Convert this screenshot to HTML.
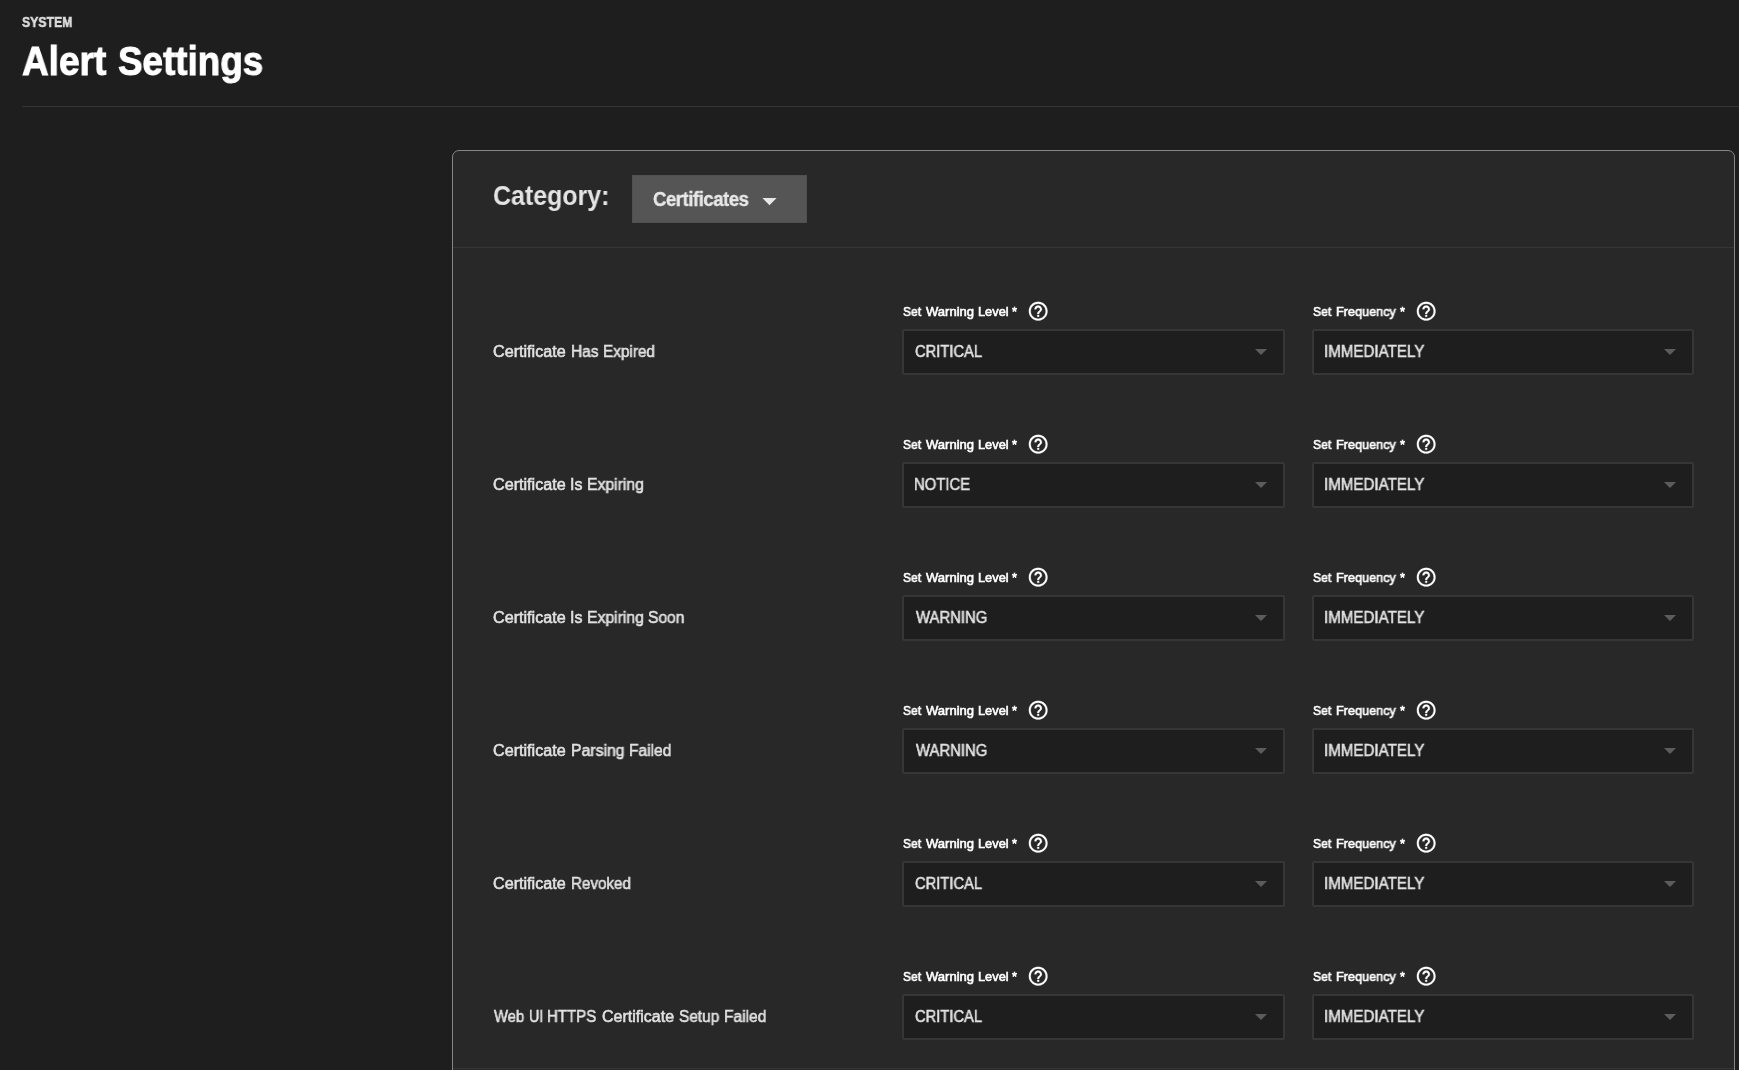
<!DOCTYPE html>
<html lang="en">
<head>
<meta charset="utf-8">
<title>Alert Settings</title>
<style>
html,body{margin:0;padding:0;}
body{width:1739px;height:1070px;overflow:hidden;background:#1e1e1e;position:relative;font-family:"Liberation Sans",sans-serif;color:#fff;}
.t{position:absolute;white-space:nowrap;line-height:1;transform-origin:0 0;will-change:transform;}
.sys{font-size:15px;font-weight:700;color:#dcdcdc;-webkit-text-stroke:0.6px #dcdcdc;}
.title{font-size:41px;font-weight:700;color:#fff;-webkit-text-stroke:1px #fff;}
.cat{font-size:27px;font-weight:700;color:#e4e4e4;}
.cert{font-size:20px;font-weight:700;color:#e8e8e8;letter-spacing:-0.5px;-webkit-text-stroke:0.35px #e8e8e8;}
.lab{font-size:12.8px;font-weight:400;color:#fff;-webkit-text-stroke:0.6px #fff;}
.val{font-size:16px;color:#e2e2e2;-webkit-text-stroke:0.55px #e2e2e2;}
.row{font-size:16px;color:#e2e2e2;-webkit-text-stroke:0.55px #e2e2e2;}
.hr{position:absolute;left:22px;top:106px;width:1717px;height:1px;background:#343434;}
.card{position:absolute;left:452px;top:150px;width:1281px;height:960px;border:1px solid #858585;border-radius:7px;background:#282828;}
.div{position:absolute;left:453px;width:1281px;height:1px;background:#363636;}
.btn{position:absolute;left:632px;top:175px;width:175px;height:48px;background:#555;box-sizing:border-box;border:1px solid #505050;}
.sel{position:absolute;width:383px;height:46px;box-sizing:border-box;border:2px solid #363636;border-radius:2px;background:#1e1e1e;}
svg{position:absolute;overflow:visible;}
</style>
</head>
<body>
<header><div class="crumb"><span class="t sys" id="sys" style="left:21.67px;top:14.0px;transform:scaleX(0.8154)">SYSTEM</span></div><h1 style="margin:0;font-size:0"><span class="t title" id="ti0" style="left:22.35px;top:41.0px;transform:scaleX(0.9023)">Alert</span> <span class="t title" id="ti1" style="left:117.83px;top:41.0px;transform:scaleX(0.8975)">Settings</span></h1></header>
<div class="hr"></div>
<div class="card"></div>
<div class="div" style="top:247px"></div>
<div class="div" style="top:1068px"></div>
<div class="cathead"><span class="t cat" id="cat" style="left:493.44px;top:183.3px;transform:scaleX(0.9241)">Category:</span><div class="btn"></div><span class="t cert" id="cert" style="left:652.91px;top:189.2px;transform:scaleX(0.9278)">Certificates</span>
<svg style="left:762px;top:198px" width="15" height="8" viewBox="0 0 15 8"><polygon points="0.4,0 14.6,0 7.5,7.2" fill="#e8e8e8"/></svg></div>
<div class="alert-row">
<div class="name"><span class="t row" id="r0_0" style="left:493.18px;top:344.2px;transform:scaleX(1.0090)">Certificate</span> <span class="t row" id="r0_1" style="left:570.50px;top:344.2px;transform:scaleX(0.9686)">Has</span> <span class="t row" id="r0_2" style="left:603.24px;top:344.2px;transform:scaleX(0.9572)">Expired</span></div>
<div class="field"><label><span class="t lab" id="lw0_0" style="left:902.78px;top:306.2px;transform:scaleX(0.9432)">Set</span> <span class="t lab" id="lw0_1" style="left:926.09px;top:306.2px;transform:scaleX(1.0185)">Warning</span> <span class="t lab" id="lw0_2" style="left:977.72px;top:306.2px;transform:scaleX(0.9951)">Level</span> <span class="t lab" id="lw0_3" style="left:1011.70px;top:306.2px;transform:scaleX(1.0000)">*</span></label><svg style="left:1027.15px;top:300.30px" width="22.4" height="22.4" viewBox="0 0 24 24"><path fill="#fff" stroke="#fff" stroke-width="0.25" d="M11 18h2v-2h-2v2zm1-16C6.48 2 2 6.48 2 12s4.480 10 10 10 10-4.480 10-10S17.520 2 12 2zm0 18c-4.410 0-8-3.590-8-8s3.590-8 8-8 8 3.590 8 8-3.590 8-8 8zm0-14c-2.210 0-4 1.790-4 4h2c0-1.100.9-2 2-2s2 .9 2 2c0 2-3 1.750-3 5h2c0-2.250 3-2.500 3-5 0-2.210-1.790-4-4-4z"/></svg>
<div class="sel" style="left:902px;top:329px"></div><span class="t val" id="v0" style="left:915.19px;top:344.3px;transform:scaleX(0.9203)">CRITICAL</span><svg style="left:1255.0px;top:349.0px" width="12" height="6" viewBox="0 0 12 6"><polygon points="0,0 12,0 6,6" fill="#5c5c5c"/></svg></div>
<div class="field"><label><span class="t lab" id="lf0_0" style="left:1313.33px;top:306.2px;transform:scaleX(0.9536)">Set</span> <span class="t lab" id="lf0_1" style="left:1335.69px;top:306.2px;transform:scaleX(0.9894)">Frequency</span> <span class="t lab" id="lf0_2" style="left:1399.70px;top:306.2px;transform:scaleX(1.0000)">*</span></label><svg style="left:1415.30px;top:300.35px" width="22.4" height="22.4" viewBox="0 0 24 24"><path fill="#fff" stroke="#fff" stroke-width="0.25" d="M11 18h2v-2h-2v2zm1-16C6.48 2 2 6.48 2 12s4.480 10 10 10 10-4.480 10-10S17.520 2 12 2zm0 18c-4.410 0-8-3.590-8-8s3.590-8 8-8 8 3.590 8 8-3.590 8-8 8zm0-14c-2.210 0-4 1.790-4 4h2c0-1.100.9-2 2-2s2 .9 2 2c0 2-3 1.750-3 5h2c0-2.250 3-2.500 3-5 0-2.210-1.790-4-4-4z"/></svg>
<div class="sel" style="left:1312px;top:329px;width:382px"></div><span class="t val" id="f0" style="left:1324.40px;top:344.3px;transform:scaleX(0.9454)">IMMEDIATELY</span><svg style="left:1664.0px;top:349.0px" width="12" height="6" viewBox="0 0 12 6"><polygon points="0,0 12,0 6,6" fill="#5c5c5c"/></svg></div>
</div>
<div class="alert-row">
<div class="name"><span class="t row" id="r1_0" style="left:493.18px;top:477.2px;transform:scaleX(1.0090)">Certificate</span> <span class="t row" id="r1_1" style="left:570.11px;top:477.2px;transform:scaleX(0.9633)">Is</span> <span class="t row" id="r1_2" style="left:587.06px;top:477.2px;transform:scaleX(0.9830)">Expiring</span></div>
<div class="field"><label><span class="t lab" id="lw1_0" style="left:902.78px;top:439.2px;transform:scaleX(0.9432)">Set</span> <span class="t lab" id="lw1_1" style="left:926.09px;top:439.2px;transform:scaleX(1.0185)">Warning</span> <span class="t lab" id="lw1_2" style="left:977.72px;top:439.2px;transform:scaleX(0.9951)">Level</span> <span class="t lab" id="lw1_3" style="left:1011.70px;top:439.2px;transform:scaleX(1.0000)">*</span></label><svg style="left:1027.15px;top:433.30px" width="22.4" height="22.4" viewBox="0 0 24 24"><path fill="#fff" stroke="#fff" stroke-width="0.25" d="M11 18h2v-2h-2v2zm1-16C6.48 2 2 6.48 2 12s4.480 10 10 10 10-4.480 10-10S17.520 2 12 2zm0 18c-4.410 0-8-3.590-8-8s3.590-8 8-8 8 3.590 8 8-3.590 8-8 8zm0-14c-2.210 0-4 1.790-4 4h2c0-1.100.9-2 2-2s2 .9 2 2c0 2-3 1.750-3 5h2c0-2.250 3-2.500 3-5 0-2.210-1.790-4-4-4z"/></svg>
<div class="sel" style="left:902px;top:462px"></div><span class="t val" id="v1" style="left:914.19px;top:477.3px;transform:scaleX(0.9279)">NOTICE</span><svg style="left:1255.0px;top:482.0px" width="12" height="6" viewBox="0 0 12 6"><polygon points="0,0 12,0 6,6" fill="#5c5c5c"/></svg></div>
<div class="field"><label><span class="t lab" id="lf1_0" style="left:1313.33px;top:439.2px;transform:scaleX(0.9536)">Set</span> <span class="t lab" id="lf1_1" style="left:1335.69px;top:439.2px;transform:scaleX(0.9894)">Frequency</span> <span class="t lab" id="lf1_2" style="left:1399.70px;top:439.2px;transform:scaleX(1.0000)">*</span></label><svg style="left:1415.30px;top:433.35px" width="22.4" height="22.4" viewBox="0 0 24 24"><path fill="#fff" stroke="#fff" stroke-width="0.25" d="M11 18h2v-2h-2v2zm1-16C6.48 2 2 6.48 2 12s4.480 10 10 10 10-4.480 10-10S17.520 2 12 2zm0 18c-4.410 0-8-3.590-8-8s3.590-8 8-8 8 3.590 8 8-3.590 8-8 8zm0-14c-2.210 0-4 1.790-4 4h2c0-1.100.9-2 2-2s2 .9 2 2c0 2-3 1.750-3 5h2c0-2.250 3-2.500 3-5 0-2.210-1.790-4-4-4z"/></svg>
<div class="sel" style="left:1312px;top:462px;width:382px"></div><span class="t val" id="f1" style="left:1324.40px;top:477.3px;transform:scaleX(0.9454)">IMMEDIATELY</span><svg style="left:1664.0px;top:482.0px" width="12" height="6" viewBox="0 0 12 6"><polygon points="0,0 12,0 6,6" fill="#5c5c5c"/></svg></div>
</div>
<div class="alert-row">
<div class="name"><span class="t row" id="r2_0" style="left:493.18px;top:610.2px;transform:scaleX(1.0090)">Certificate</span> <span class="t row" id="r2_1" style="left:570.11px;top:610.2px;transform:scaleX(0.9633)">Is</span> <span class="t row" id="r2_2" style="left:587.06px;top:610.2px;transform:scaleX(0.9830)">Expiring</span> <span class="t row" id="r2_3" style="left:648.23px;top:610.2px;transform:scaleX(0.9745)">Soon</span></div>
<div class="field"><label><span class="t lab" id="lw2_0" style="left:902.78px;top:572.2px;transform:scaleX(0.9432)">Set</span> <span class="t lab" id="lw2_1" style="left:926.09px;top:572.2px;transform:scaleX(1.0185)">Warning</span> <span class="t lab" id="lw2_2" style="left:977.72px;top:572.2px;transform:scaleX(0.9951)">Level</span> <span class="t lab" id="lw2_3" style="left:1011.70px;top:572.2px;transform:scaleX(1.0000)">*</span></label><svg style="left:1027.15px;top:566.30px" width="22.4" height="22.4" viewBox="0 0 24 24"><path fill="#fff" stroke="#fff" stroke-width="0.25" d="M11 18h2v-2h-2v2zm1-16C6.48 2 2 6.48 2 12s4.480 10 10 10 10-4.480 10-10S17.520 2 12 2zm0 18c-4.410 0-8-3.590-8-8s3.590-8 8-8 8 3.590 8 8-3.590 8-8 8zm0-14c-2.210 0-4 1.790-4 4h2c0-1.100.9-2 2-2s2 .9 2 2c0 2-3 1.750-3 5h2c0-2.250 3-2.500 3-5 0-2.210-1.790-4-4-4z"/></svg>
<div class="sel" style="left:902px;top:595px"></div><span class="t val" id="v2" style="left:915.50px;top:610.3px;transform:scaleX(0.9296)">WARNING</span><svg style="left:1255.0px;top:615.0px" width="12" height="6" viewBox="0 0 12 6"><polygon points="0,0 12,0 6,6" fill="#5c5c5c"/></svg></div>
<div class="field"><label><span class="t lab" id="lf2_0" style="left:1313.33px;top:572.2px;transform:scaleX(0.9536)">Set</span> <span class="t lab" id="lf2_1" style="left:1335.69px;top:572.2px;transform:scaleX(0.9894)">Frequency</span> <span class="t lab" id="lf2_2" style="left:1399.70px;top:572.2px;transform:scaleX(1.0000)">*</span></label><svg style="left:1415.30px;top:566.35px" width="22.4" height="22.4" viewBox="0 0 24 24"><path fill="#fff" stroke="#fff" stroke-width="0.25" d="M11 18h2v-2h-2v2zm1-16C6.48 2 2 6.48 2 12s4.480 10 10 10 10-4.480 10-10S17.520 2 12 2zm0 18c-4.410 0-8-3.590-8-8s3.590-8 8-8 8 3.590 8 8-3.590 8-8 8zm0-14c-2.210 0-4 1.790-4 4h2c0-1.100.9-2 2-2s2 .9 2 2c0 2-3 1.750-3 5h2c0-2.250 3-2.500 3-5 0-2.210-1.790-4-4-4z"/></svg>
<div class="sel" style="left:1312px;top:595px;width:382px"></div><span class="t val" id="f2" style="left:1324.40px;top:610.3px;transform:scaleX(0.9454)">IMMEDIATELY</span><svg style="left:1664.0px;top:615.0px" width="12" height="6" viewBox="0 0 12 6"><polygon points="0,0 12,0 6,6" fill="#5c5c5c"/></svg></div>
</div>
<div class="alert-row">
<div class="name"><span class="t row" id="r3_0" style="left:493.18px;top:743.2px;transform:scaleX(1.0090)">Certificate</span> <span class="t row" id="r3_1" style="left:570.76px;top:743.2px;transform:scaleX(0.9870)">Parsing</span> <span class="t row" id="r3_2" style="left:628.79px;top:743.2px;transform:scaleX(0.9706)">Failed</span></div>
<div class="field"><label><span class="t lab" id="lw3_0" style="left:902.78px;top:705.2px;transform:scaleX(0.9432)">Set</span> <span class="t lab" id="lw3_1" style="left:926.09px;top:705.2px;transform:scaleX(1.0185)">Warning</span> <span class="t lab" id="lw3_2" style="left:977.72px;top:705.2px;transform:scaleX(0.9951)">Level</span> <span class="t lab" id="lw3_3" style="left:1011.70px;top:705.2px;transform:scaleX(1.0000)">*</span></label><svg style="left:1027.15px;top:699.30px" width="22.4" height="22.4" viewBox="0 0 24 24"><path fill="#fff" stroke="#fff" stroke-width="0.25" d="M11 18h2v-2h-2v2zm1-16C6.48 2 2 6.48 2 12s4.480 10 10 10 10-4.480 10-10S17.520 2 12 2zm0 18c-4.410 0-8-3.590-8-8s3.590-8 8-8 8 3.590 8 8-3.590 8-8 8zm0-14c-2.210 0-4 1.790-4 4h2c0-1.100.9-2 2-2s2 .9 2 2c0 2-3 1.750-3 5h2c0-2.250 3-2.500 3-5 0-2.210-1.790-4-4-4z"/></svg>
<div class="sel" style="left:902px;top:728px"></div><span class="t val" id="v3" style="left:915.50px;top:743.3px;transform:scaleX(0.9296)">WARNING</span><svg style="left:1255.0px;top:748.0px" width="12" height="6" viewBox="0 0 12 6"><polygon points="0,0 12,0 6,6" fill="#5c5c5c"/></svg></div>
<div class="field"><label><span class="t lab" id="lf3_0" style="left:1313.33px;top:705.2px;transform:scaleX(0.9536)">Set</span> <span class="t lab" id="lf3_1" style="left:1335.69px;top:705.2px;transform:scaleX(0.9894)">Frequency</span> <span class="t lab" id="lf3_2" style="left:1399.70px;top:705.2px;transform:scaleX(1.0000)">*</span></label><svg style="left:1415.30px;top:699.35px" width="22.4" height="22.4" viewBox="0 0 24 24"><path fill="#fff" stroke="#fff" stroke-width="0.25" d="M11 18h2v-2h-2v2zm1-16C6.48 2 2 6.48 2 12s4.480 10 10 10 10-4.480 10-10S17.520 2 12 2zm0 18c-4.410 0-8-3.590-8-8s3.590-8 8-8 8 3.590 8 8-3.590 8-8 8zm0-14c-2.210 0-4 1.790-4 4h2c0-1.100.9-2 2-2s2 .9 2 2c0 2-3 1.750-3 5h2c0-2.250 3-2.500 3-5 0-2.210-1.790-4-4-4z"/></svg>
<div class="sel" style="left:1312px;top:728px;width:382px"></div><span class="t val" id="f3" style="left:1324.40px;top:743.3px;transform:scaleX(0.9454)">IMMEDIATELY</span><svg style="left:1664.0px;top:748.0px" width="12" height="6" viewBox="0 0 12 6"><polygon points="0,0 12,0 6,6" fill="#5c5c5c"/></svg></div>
</div>
<div class="alert-row">
<div class="name"><span class="t row" id="r4_0" style="left:493.18px;top:876.2px;transform:scaleX(1.0090)">Certificate</span> <span class="t row" id="r4_1" style="left:570.51px;top:876.2px;transform:scaleX(0.9489)">Revoked</span></div>
<div class="field"><label><span class="t lab" id="lw4_0" style="left:902.78px;top:838.2px;transform:scaleX(0.9432)">Set</span> <span class="t lab" id="lw4_1" style="left:926.09px;top:838.2px;transform:scaleX(1.0185)">Warning</span> <span class="t lab" id="lw4_2" style="left:977.72px;top:838.2px;transform:scaleX(0.9951)">Level</span> <span class="t lab" id="lw4_3" style="left:1011.70px;top:838.2px;transform:scaleX(1.0000)">*</span></label><svg style="left:1027.15px;top:832.30px" width="22.4" height="22.4" viewBox="0 0 24 24"><path fill="#fff" stroke="#fff" stroke-width="0.25" d="M11 18h2v-2h-2v2zm1-16C6.48 2 2 6.48 2 12s4.480 10 10 10 10-4.480 10-10S17.520 2 12 2zm0 18c-4.410 0-8-3.590-8-8s3.590-8 8-8 8 3.590 8 8-3.590 8-8 8zm0-14c-2.210 0-4 1.790-4 4h2c0-1.100.9-2 2-2s2 .9 2 2c0 2-3 1.750-3 5h2c0-2.250 3-2.500 3-5 0-2.210-1.790-4-4-4z"/></svg>
<div class="sel" style="left:902px;top:861px"></div><span class="t val" id="v4" style="left:915.19px;top:876.3px;transform:scaleX(0.9203)">CRITICAL</span><svg style="left:1255.0px;top:881.0px" width="12" height="6" viewBox="0 0 12 6"><polygon points="0,0 12,0 6,6" fill="#5c5c5c"/></svg></div>
<div class="field"><label><span class="t lab" id="lf4_0" style="left:1313.33px;top:838.2px;transform:scaleX(0.9536)">Set</span> <span class="t lab" id="lf4_1" style="left:1335.69px;top:838.2px;transform:scaleX(0.9894)">Frequency</span> <span class="t lab" id="lf4_2" style="left:1399.70px;top:838.2px;transform:scaleX(1.0000)">*</span></label><svg style="left:1415.30px;top:832.35px" width="22.4" height="22.4" viewBox="0 0 24 24"><path fill="#fff" stroke="#fff" stroke-width="0.25" d="M11 18h2v-2h-2v2zm1-16C6.48 2 2 6.48 2 12s4.480 10 10 10 10-4.480 10-10S17.520 2 12 2zm0 18c-4.410 0-8-3.590-8-8s3.590-8 8-8 8 3.590 8 8-3.590 8-8 8zm0-14c-2.210 0-4 1.790-4 4h2c0-1.100.9-2 2-2s2 .9 2 2c0 2-3 1.750-3 5h2c0-2.250 3-2.500 3-5 0-2.210-1.790-4-4-4z"/></svg>
<div class="sel" style="left:1312px;top:861px;width:382px"></div><span class="t val" id="f4" style="left:1324.40px;top:876.3px;transform:scaleX(0.9454)">IMMEDIATELY</span><svg style="left:1664.0px;top:881.0px" width="12" height="6" viewBox="0 0 12 6"><polygon points="0,0 12,0 6,6" fill="#5c5c5c"/></svg></div>
</div>
<div class="alert-row">
<div class="name"><span class="t row" id="r5_0" style="left:493.54px;top:1009.2px;transform:scaleX(0.9236)">Web</span> <span class="t row" id="r5_1" style="left:528.64px;top:1009.2px;transform:scaleX(0.8916)">UI</span> <span class="t row" id="r5_2" style="left:547.02px;top:1009.2px;transform:scaleX(0.9392)">HTTPS</span> <span class="t row" id="r5_3" style="left:602.00px;top:1009.2px;transform:scaleX(1.0000)">Certificate</span> <span class="t row" id="r5_4" style="left:678.79px;top:1009.2px;transform:scaleX(0.9616)">Setup</span> <span class="t row" id="r5_5" style="left:723.79px;top:1009.2px;transform:scaleX(0.9706)">Failed</span></div>
<div class="field"><label><span class="t lab" id="lw5_0" style="left:902.78px;top:971.2px;transform:scaleX(0.9432)">Set</span> <span class="t lab" id="lw5_1" style="left:926.09px;top:971.2px;transform:scaleX(1.0185)">Warning</span> <span class="t lab" id="lw5_2" style="left:977.72px;top:971.2px;transform:scaleX(0.9951)">Level</span> <span class="t lab" id="lw5_3" style="left:1011.70px;top:971.2px;transform:scaleX(1.0000)">*</span></label><svg style="left:1027.15px;top:965.30px" width="22.4" height="22.4" viewBox="0 0 24 24"><path fill="#fff" stroke="#fff" stroke-width="0.25" d="M11 18h2v-2h-2v2zm1-16C6.48 2 2 6.48 2 12s4.480 10 10 10 10-4.480 10-10S17.520 2 12 2zm0 18c-4.410 0-8-3.590-8-8s3.590-8 8-8 8 3.590 8 8-3.590 8-8 8zm0-14c-2.210 0-4 1.790-4 4h2c0-1.100.9-2 2-2s2 .9 2 2c0 2-3 1.750-3 5h2c0-2.250 3-2.500 3-5 0-2.210-1.790-4-4-4z"/></svg>
<div class="sel" style="left:902px;top:994px"></div><span class="t val" id="v5" style="left:915.19px;top:1009.3px;transform:scaleX(0.9203)">CRITICAL</span><svg style="left:1255.0px;top:1014.0px" width="12" height="6" viewBox="0 0 12 6"><polygon points="0,0 12,0 6,6" fill="#5c5c5c"/></svg></div>
<div class="field"><label><span class="t lab" id="lf5_0" style="left:1313.33px;top:971.2px;transform:scaleX(0.9536)">Set</span> <span class="t lab" id="lf5_1" style="left:1335.69px;top:971.2px;transform:scaleX(0.9894)">Frequency</span> <span class="t lab" id="lf5_2" style="left:1399.70px;top:971.2px;transform:scaleX(1.0000)">*</span></label><svg style="left:1415.30px;top:965.35px" width="22.4" height="22.4" viewBox="0 0 24 24"><path fill="#fff" stroke="#fff" stroke-width="0.25" d="M11 18h2v-2h-2v2zm1-16C6.48 2 2 6.48 2 12s4.480 10 10 10 10-4.480 10-10S17.520 2 12 2zm0 18c-4.410 0-8-3.590-8-8s3.590-8 8-8 8 3.590 8 8-3.590 8-8 8zm0-14c-2.210 0-4 1.790-4 4h2c0-1.100.9-2 2-2s2 .9 2 2c0 2-3 1.750-3 5h2c0-2.250 3-2.500 3-5 0-2.210-1.790-4-4-4z"/></svg>
<div class="sel" style="left:1312px;top:994px;width:382px"></div><span class="t val" id="f5" style="left:1324.40px;top:1009.3px;transform:scaleX(0.9454)">IMMEDIATELY</span><svg style="left:1664.0px;top:1014.0px" width="12" height="6" viewBox="0 0 12 6"><polygon points="0,0 12,0 6,6" fill="#5c5c5c"/></svg></div>
</div>
</body>
</html>
